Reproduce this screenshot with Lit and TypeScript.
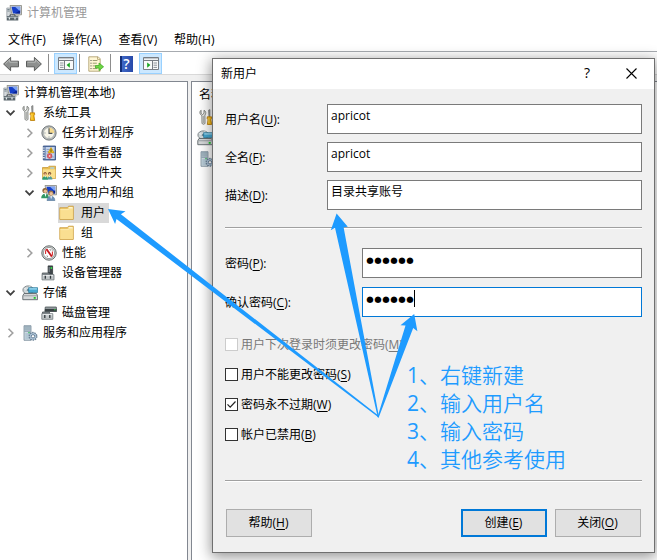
import { LitElement, html, svg, css, nothing } from "lit";
import { customElement } from "lit/decorators.js";
import { classMap } from "lit/directives/class-map.js";

const monitor = svg`
  <path d="M4 .5h11.5v9.3H6z" fill="#d8d9d6" stroke="#85877f" stroke-width=".8"/>
  <path d="M5.5 1.8h8.6v6.7H7z" fill="#1740c8"/>
  <path d="M9 1.8h5.1v4.6z" fill="#7fa5f4"/>
  <path d="M9 8.5l5.1-3.2v3.2z" fill="#0b2391"/>`;
const computer = svg`${monitor}
  <path d="M.8 3h3.5v8.5H.8z" fill="#d5dadd" stroke="#8b9499" stroke-width=".7"/>
  <path d="M1.4 4.5h2.2M1.4 6h2.2" stroke="#5d6e78" stroke-width=".8"/>
  <path d="M9 10h4l1 1.500H8z" fill="#b4b5b0"/>
  <path d="M.7 11.2h11.6v4.3H.7z" fill="#59646b"/>
  <path d="M4 11V9.9h5V11" fill="none" stroke="#40494f"/>
  <path d="M1.2 12h10.6v1H1.2z" fill="#9da8ad"/>
  <path d="M3.4 12.4v2M9 12.4v2" stroke="#e7ecee" stroke-width="1.3"/>`;
const gear = svg`
  <circle cx="11" cy="11.3" r="3.7" fill="#b7cde0" stroke="#6c8296" stroke-width="1.5" stroke-dasharray="1.5 .8"/>
  <circle cx="11" cy="11.3" r="1.7" fill="#fff" stroke="#59748d" stroke-width=".9"/>`;

const icons: Record<string, unknown> = {
  computer,
  tools: svg`
    <path d="M2.1 1.2v3l1.3 1.4 1.6-1.3v-3C7 2 7.3 4.6 5.9 6.1L6 14.2c-.2 1.4-2.8 1.4-3 0L2.9 6.6C.5 5.5.3 2.3 2.1 1.2z" fill="#e6e7e4" stroke="#777a77" stroke-width=".9"/>
    <path d="M4.5 7v7" stroke="#a8aaa7" stroke-width=".9"/>
    <path d="M9.5 1.2l1.5-.7v7H9.9z" fill="#999c9a" stroke="#757775" stroke-width=".6"/>
    <path d="M8.3 7.8h4.2l.1 2-.7.9.8 4.8H8.4l.6-4.8-.8-1z" fill="#f3b610" stroke="#b97a05" stroke-width=".8"/>
    <path d="M9.9 8.5v6" stroke="#ffe06a" stroke-width=".9"/>`,
  clock: svg`
    <circle cx="8" cy="8" r="7.1" fill="#c0c3c3" stroke="#6e7476"/>
    <circle cx="8" cy="8" r="5.5" fill="#f7f5e9" stroke="#90979b" stroke-width=".6"/>
    <path d="M8 8V2.6A5.4 5.4 0 0 1 13.4 8z" fill="#f5da90"/>
    <path d="M8 3.2V8.4h3.4" fill="none" stroke="#4b5154" stroke-width="1.1"/>
    <path d="M3.6 8h.8M8 12.4v-.8" stroke="#5d6b78"/>`,
  events: svg`
    <path d="M2.3 1h12.2v14H2.3z" fill="#5d79a9" stroke="#304d80" stroke-width=".8"/>
    <path d="M4.6 2h9v12h-9z" fill="#c3d2ea"/>
    <path d="M5.5 4.5h3M5.5 6.7h2M5.500 8.9h1M11 12h2" stroke="#7b90b7" stroke-width=".7"/>
    <path d="M1 3h2.7M1 5.4h2.7M1 7.8h2.7M1 10.2h2.7M1 12.6h2.7" stroke="#e6e9ed" stroke-width="1.1"/>
    <path d="M10 2.6l3 5.1H7.100z" fill="#ffd41c" stroke="#c18b00" stroke-width=".7"/>
    <path d="M10 4.3v2.6" stroke="#37300a" stroke-width=".9"/>
    <circle cx="8.6" cy="11" r="2.4" fill="#e0525a" stroke="#b8303a" stroke-width=".5"/>
    <path d="M7.7 10.100l1.800 1.800m0-1.800l-1.800 1.800" stroke="#fff" stroke-width=".8"/>`,
  shared: svg`
    <path d="M1.500 2.500h5.500l1-1.300h6.5v12.300h-13z" fill="#e9bd50" stroke="#c0902c" stroke-width=".7"/>
    <path d="M9.2 2.300h4v1.400h-4z" fill="#a5d4ed"/>
    <path d="M1.800 4.300h12.500v9H1.800z" fill="#fadf8c"/>
    <circle cx="4.100" cy="8.6" r="1.600" fill="#8a542d"/><circle cx="4.2" cy="9.2" r="1" fill="#efbc92"/>
    <path d="M1.200 14.800q.1-3.400 3-3.600 2.600.2 2.800 3.600z" fill="#2f9b70"/>
    <circle cx="8.6" cy="8.600" r="1.600" fill="#714728"/><circle cx="8.6" cy="9.2" r="1" fill="#efbc92"/>
    <path d="M6.400 14.400q.3-3.100 2.300-3.200 2.500.2 2.700 3.200z" fill="#4f9b9a"/>
    <path d="M3.6 11l.6 1.700.7-1.700M8 11l.6 1.500.6-1.500" fill="#fff"/>`,
  users: svg`${monitor}
    <circle cx="4" cy="5.5" r="2.6" fill="#876137"/><circle cx="4.4" cy="6.2" r="1.7" fill="#ebbc91"/>
    <path d="M.2 13.2Q.4 8.9 4.3 8.8q3.5.2 3.5 4.4z" fill="#329765"/>
    <path d="M3.6 8.9l.8 3 1-3z" fill="#fff"/>
    <circle cx="9.9" cy="8.1" r="2.6" fill="#9d7648"/><circle cx="10.2" cy="8.7" r="1.7" fill="#ebc29b"/>
    <path d="M6 15.7q.3-4.4 4-4.5 3.7.2 3.9 4.5z" fill="#6c92bb" stroke="#53708d" stroke-width=".5"/>
    <path d="M9.3 11.3l.8 3 1-3z" fill="#fff"/>`,
  folder: svg`
    <path d="M.8 2.700h7.400L9.600 1.200h4.700v13.200H.8z" fill="#efc969" stroke="#c99b3b" stroke-width=".8"/>
    <path d="M10 2h3.700v1.200h-4.700z" fill="#fff5ce"/>
    <path d="M1.2 4.200h7.700l1.200-1h3.800V14H1.200z" fill="#fadf91"/>
    <path d="M1.3 4.600H9l1.200-1h3.600" fill="none" stroke="#fff3c8" stroke-width=".6"/>`,
  perf: svg`
    <circle cx="8" cy="8" r="7.2" fill="#d1d4d3" stroke="#676d6d"/>
    <circle cx="8" cy="8" r="5.600" fill="#fff" stroke="#858b8b" stroke-width=".8"/>
    <path d="M4.600 9V6q.2-1.800 1.700-1.800M11.400 6.500v3q-.1 1.800-1.500 2.200" fill="none" stroke="#d53131" stroke-width="1.100"/>
    <path d="M5.600 4.300l5 6.900" stroke="#c71920" stroke-width="1.900"/>
    <path d="M8.800 4l1 1.700M10.800 4.500l.7 1M6.600 12l-.6-1.500" fill="none" stroke="#555" stroke-width=".7"/>`,
  device: svg`
    <path d="M7.1.9h4.5v8.5H7.1z" fill="#40484c" stroke="#252c2f" stroke-width=".7"/>
    <path d="M8.2 2v5" stroke="#a1abb0" stroke-width=".7"/>
    <path d="M9.6 2h1.5v2H9.6z" fill="#35d849"/>
    <path d="M1.3 10V8h7v2" fill="#858d91" stroke="#4c5356" stroke-width=".8"/>
    <path d="M1 9.6h12v5.3H1z" fill="#c1c6c8" stroke="#727a7e" stroke-width=".8"/>
    <path d="M2 10.6h10" stroke="#eef0f1"/>
    <path d="M4.3 10.7v3M9.5 10.7v3" stroke="#30383c" stroke-width="1.3"/>`,
  storage: svg`
    <ellipse cx="6.2" cy="5" rx="5.3" ry="4.1" fill="#cfd6d8" stroke="#788184" stroke-width=".9"/>
    <path d="M2.4 3.7l3.8 1.1L8 1.2" fill="none" stroke="#f4f7f8"/>
    <ellipse cx="6" cy="5" rx="1.4" ry="1.1" fill="#6a8490"/>
    <path d="M6.6 2.7h9v4.8h-9z" fill="#46a8d2" stroke="#257597" stroke-width=".7"/>
    <path d="M7.3 3.3h7.6v1.2H7.3z" fill="#a8def3"/>
    <path d="M2 8.5h12.5l1.1 2.2v4H.8v-4z" fill="#d5d8d9" stroke="#60686b" stroke-width=".9"/>
    <path d="M1.2 10.4h14v.8h-14z" fill="#8b9396"/>
    <path d="M11.7 12h2v1.8h-2z" fill="#1cc92b"/>`,
  disk: svg`
    <path d="M4.3 2h11l.4 4.5H3.8z" fill="#929a9d" stroke="#4c5558" stroke-width=".8"/>
    <path d="M4 4h11.5v2.5H4z" fill="#394144"/><path d="M13.2 4.8h1.4" stroke="#35dc45" stroke-width="1.1"/>
    <path d="M1.5 9V7h7v2" fill="#858d91" stroke="#4c5356" stroke-width=".8"/>
    <path d="M.8 8.7h11v5.6H.8z" fill="#c1c6c8" stroke="#727a7e" stroke-width=".8"/>
    <path d="M1.7 9.7h9.5" stroke="#eef0f1"/>
    <path d="M3.8 10v3M8.8 10v3" stroke="#30383c" stroke-width="1.3"/>`,
  services: svg`
    <path d="M2 .7h7v14.6H2z" fill="#cedae2" stroke="#778b99" stroke-width=".8"/>
    <path d="M2.5 2h6M2.5 4h6M2.5 6.1h6" stroke="#5e7b8e" stroke-width=".8"/>
    <path d="M3.3 8h4.5v6.4H3.3z" fill="#b3c7d4"/>
    <path d="M6.3 7h1.4v1.2H6.3z" fill="#35bb5b"/>${gear}`,
  back: svg`<path d="M.6 8L7.600 1.400v3.800h7.900v5.600H7.600v3.900z" fill="#8e908f" stroke="#5a5c5b"/>
    <path d="M2.4 7.700l4.300-4v2.500h7.800" fill="none" stroke="#bcbebd" stroke-width=".9"/>`,
  forward: svg`<path d="M15.4 8l-7-6.600v3.800H.5v5.600h7.900v3.900z" fill="#8e908f" stroke="#5a5c5b"/>
    <path d="M1.500 6.200h7.800V3.700l4.300 4" fill="none" stroke="#bcbebd" stroke-width=".9"/>`,
  tree: svg`<path d="M.5 2.5h15v12H.5z" fill="#f9fafa" stroke="#777d84"/>
    <path d="M1 3h14v1.2H1z" fill="#c3c8cd"/><path d="M1 5.500h14" stroke="#777d84"/>
    <path d="M6.500 6v8.5" stroke="#777d84"/><path d="M2 8h3.500M2 10.2h3.500M2 12.4h3.500" stroke="#8a9299"/>
    <path d="M11.800 7.400v5.400L8.600 10.100z" fill="#16a51e"/>`,
  panel: svg`<path d="M.5 2.5h15v12H.5z" fill="#f9fafa" stroke="#777d84"/>
    <path d="M1 3h14v1.2H1z" fill="#c3c8cd"/><path d="M1 5.500h14" stroke="#777d84"/>
    <path d="M9.500 6v8.5" stroke="#777d84"/><path d="M10.500 8H14M10.500 10.2H14M10.500 12.4H14" stroke="#8a9299"/>
    <path d="M4.200 7.400v5.400l3.200-2.700z" fill="#16a51e"/>`,
  exporting: svg`<path d="M.8.8h9.400l2 2v12.400H.8z" fill="#fff7d5" stroke="#a79562" stroke-width=".8"/>
    <path d="M9.5 1v2.400H12" fill="none" stroke="#a79562" stroke-width=".7"/>
    <path d="M2.500 4.500h1M2.500 7.200h1M2.500 9.900h1M2.500 12.600h1" stroke="#484848"/>
    <path d="M4.700 4.500h4.700M4.700 7.200h4.100M4.700 9.900h3M4.700 12.600h4.500" stroke="#81865a" stroke-width=".8"/>
    <path d="M7.500 9.500h3.500V7l4.600 3.800-4.600 3.800v-2.500H7.500z" fill="#6ed544" stroke="#35a51b" stroke-width=".7"/>`,
};

const icon = (name: string) => svg`<svg width="16" height="16" viewBox="0 0 16 16">${icons[name]}</svg>`;

interface TreeNode { text: string; icon: string; level: number; open?: boolean; selected?: boolean }

const nodes: TreeNode[] = [
  { text: "计算机管理(本地)", icon: "computer", level: 0 },
  { text: "系统工具", icon: "tools", level: 1, open: true },
  { text: "任务计划程序", icon: "clock", level: 2, open: false },
  { text: "事件查看器", icon: "events", level: 2, open: false },
  { text: "共享文件夹", icon: "shared", level: 2, open: false },
  { text: "本地用户和组", icon: "users", level: 2, open: true },
  { text: "用户", icon: "folder", level: 3, selected: true },
  { text: "组", icon: "folder", level: 3 },
  { text: "性能", icon: "perf", level: 2, open: false },
  { text: "设备管理器", icon: "device", level: 2 },
  { text: "存储", icon: "storage", level: 1, open: true },
  { text: "磁盘管理", icon: "disk", level: 2 },
  { text: "服务和应用程序", icon: "services", level: 1, open: false },
];

const base = css`
  * { box-sizing: border-box; }
  svg { display: block; flex: none; }
`;

@customElement("console-tree")
class ConsoleTree extends LitElement {
  static styles = [base, css`
    :host { display: block; padding-top: 1px; }
    .row { display: flex; align-items: center; height: 20px; }
    .level0 { padding-left: 3px; }
    .level1 { padding-left: 3px; }
    .level2 { padding-left: 22px; }
    .level3 { padding-left: 58px; }
    .chevron { width: 16px; height: 16px; margin-right: 3px; flex: none; }
    .item { display: flex; align-items: center; height: 20px; gap: 5px; }
    .level3 .item { padding: 0 4px 0 1px; gap: 6px; }
    .selected .item { background: #d9d9d9; }
  `];
  render() {
    return nodes.map((n) => html`
      <div class=${classMap({ row: true, ["level" + n.level]: true, selected: !!n.selected })}>
        ${n.level === 1 || n.level === 2 ? html`<div class="chevron">${n.open === undefined ? nothing : n.open
          ? svg`<svg width="16" height="16"><path d="M3.500 5.700l4 4 4-4" fill="none" stroke="#404040" stroke-width="1.700"/></svg>`
          : svg`<svg width="16" height="16"><path d="M5.500 3.700l4.300 4.300-4.300 4.300" fill="none" stroke="#a0a0a0" stroke-width="1.600"/></svg>`}</div>` : nothing}
        <div class="item">${icon(n.icon)}<span>${n.text}</span></div>
      </div>`);
  }
}

@customElement("new-user-dialog")
class NewUserDialog extends LitElement {
  static styles = [base, css`
    :host { display: flex; flex-direction: column; border: 1px solid #6f6f6f; background: #f0f0f0;
      box-shadow: 0 3px 13px 1px rgba(0, 0, 0, .42); }
    .title { display: flex; align-items: center; height: 30px; background: #fff; padding-left: 8px; flex: none; }
    .title .name { flex: 1; }
    .title .help { width: 14px; text-align: center; margin-right: 32px; font-size: 14px; font-weight: 500; line-height: 26px; padding-bottom: 2px; }
    .title svg { margin: 0 17px 2px 0; }
    .body { display: flex; flex-direction: column; padding: 15px 12px 0 12px; }
    .field { display: flex; align-items: center; height: 30px; margin-bottom: 8px; }
    .field label { flex: none; width: 102px; padding-top: 2px; }
    .field.secret label { width: 137px; }
    .box { flex: 1; height: 30px; border: 1px solid #7a7a7a; background: #fff; padding: 0 3px; display: flex; line-height: 21px; }
    .box.focus { border-color: #0078d7; }
    .dots { display: flex; font-family: "DejaVu Sans", sans-serif; font-size: 8.5px; line-height: 22px; }
    .dots span { width: 8px; display: flex; justify-content: center; }
    .caret { width: 1px; height: 17px; background: #000; margin-top: 2px; }
    .rule { height: 2px; border-top: 1px solid #a0a0a0; background: #fff; }
    .first { margin: 9px 0 19px; }
    .second { margin: 39px 0 27px; }
    .secret { margin-bottom: 9px; }
    .checks { display: flex; flex-direction: column; gap: 17px; margin-top: 12px; }
    .check { display: flex; align-items: center; height: 13px; gap: 3px; }
    .mark { width: 13px; height: 13px; border: 1px solid #333; background: #fff; }
    .off { color: #787878; }
    .off .mark { border-color: #ccc; }
    .buttons { display: flex; gap: 8px; padding: 0 1px; }
    .button { width: 86px; height: 28px; border: 1px solid #adadad; background: #e1e1e1; display: flex; align-items: center;
      justify-content: center; padding-right: 1px; }
    .help-button { margin-right: auto; }
    .default { border: 2px solid #0078d7; }
    u { text-underline-offset: 1.5px; text-decoration-thickness: 1px; }
  `];
  private key(k: string) { return html`(<u>${k}</u>)`; }
  private field(label: string, k: string, value: string) {
    return html`<div class="field"><label>${label}${this.key(k)}:</label><div class="box">${value}</div></div>`;
  }
  private secret(label: string, k: string, focus: boolean) {
    return html`<div class="field secret"><label>${label}${this.key(k)}:</label>
      <div class=${classMap({ box: true, focus })}><div class="dots">${Array.from({ length: 6 }, () => html`<span>●</span>`)}</div>
      ${focus ? html`<i class="caret"></i>` : nothing}</div></div>`;
  }
  private check(label: string, k: string, checked = false, off = false) {
    return html`<div class=${classMap({ check: true, off })}><div class="mark">${checked
      ? svg`<svg width="11" height="11"><path d="M1.500 5.300l2.700 2.800 5.300-5.600" fill="none" stroke="#222" stroke-width="1.200"/></svg>` : nothing}</div>
      <span>${label}${this.key(k)}</span></div>`;
  }
  render() {
    return html`
      <div class="title"><span class="name">新用户</span><span class="help">?</span>
        <svg width="11" height="11"><path d="M.5.5l10 10m0-10l-10 10" stroke="#000" stroke-width="1.100"/></svg></div>
      <div class="body">
        ${this.field("用户名", "U", "apricot")}
        ${this.field("全名", "F", "apricot")}
        ${this.field("描述", "D", "目录共享账号")}
        <div class="rule first"></div>
        ${this.secret("密码", "P", false)}
        ${this.secret("确认密码", "C", true)}
        <div class="checks">
          ${this.check("用户下次登录时须更改密码", "M", false, true)}
          ${this.check("用户不能更改密码", "S")}
          ${this.check("密码永不过期", "W", true)}
          ${this.check("帐户已禁用", "B")}
        </div>
        <div class="rule second"></div>
        <div class="buttons">
          <div class="button help-button"><span>帮助${this.key("H")}</span></div>
          <div class="button default"><span>创建${this.key("E")}</span></div>
          <div class="button"><span>关闭${this.key("O")}</span></div>
        </div>
      </div>`;
  }
}

@customElement("app-root")
class AppRoot extends LitElement {
  static styles = [base, css`
    :host { display: flex; flex-direction: column; position: relative; width: 657px; height: 560px; overflow: hidden;
      background: #f0f0f0; color: #000; font: 12px/16px "Open Sans", "Noto Sans CJK SC", sans-serif; white-space: nowrap; }
    .caption { display: flex; align-items: center; gap: 5px; height: 25px; padding-left: 6px; background: #fff; color: #999; flex: none; }
    .menu { display: flex; align-items: center; height: 26px; padding: 3px 0 0 8px; gap: 16.500px; background: #fff; flex: none; letter-spacing: .15px; }
    .tools { display: flex; align-items: center; height: 24px; border-top: 1px solid #a7abb0; border-bottom: 1px solid #d9d9d9;
      background: #fff; padding-left: 3px; flex: none; }
    .tools .forward { margin-left: 7px; }
    .tools > svg, .tools .forward { margin-top: 2px; }
    .sep { width: 1px; height: 18px; background: #8d8d8d; margin: 0 5px 0 6px; }
    .sep.tight { margin: 0 8px 0 2px; }
    .sep.wide { margin: 0 9px 0 6px; }
    .toggle { width: 23px; height: 21px; background: #cce8ff; border: 1px solid #99d1ff; display: flex; align-items: center; justify-content: center; }
    .book { width: 13px; height: 16px; background: linear-gradient(90deg, #142f78 2px, #3f68c7 2px, #2749a9); color: #fff;
      font-size: 14px; font-weight: 600; line-height: 16px; text-align: center; margin: 1px 6px 0 0; }
    .panes { display: flex; flex: 1; gap: 3px; margin-top: 6px; }
    console-tree { width: 188px; background: #fff; border: solid #828790; border-width: 1px 1px 0 0; flex: none; }
    .list { flex: 1; background: #fff; border: solid #828790; border-width: 1px 0 0 1px; padding: 5px 0 0 7px; }
    .list .head { height: 17px; }
    .list .entry { height: 21px; display: flex; align-items: center; padding-top: 4px; }
    .list .entry.out { margin-left: -2px; }
    new-user-dialog { position: absolute; left: 212px; top: 58px; width: 443px; height: 495px; }
    .arrows { position: absolute; left: 0; top: 0; }
    .steps { position: absolute; left: 407px; top: 361px; color: #1e9bff; font-size: 21px; line-height: 28px; font-weight: 350; }
    .steps .num { display: inline-block; width: 12px; font-weight: 400; }
  `];
  render() {
    return html`
      <div class="caption">${icon("computer")}<span>计算机管理</span></div>
      <div class="menu"><span>文件(F)</span><span>操作(A)</span><span>查看(V)</span><span>帮助(H)</span></div>
      <div class="tools">
        ${icon("back")}<div class="forward">${icon("forward")}</div><i class="sep"></i>
        <div class="toggle">${icon("tree")}</div><i class="sep tight"></i>
        ${icon("exporting")}<i class="sep wide"></i>
        <div class="book">?</div><div class="toggle">${icon("panel")}</div>
      </div>
      <div class="panes">
        <console-tree></console-tree>
        <div class="list"><div class="head">名称</div>
          <div class="entry">${icon("tools")}</div>
          <div class="entry out">${icon("storage")}</div>
          <div class="entry">${icon("services")}</div>
        </div>
      </div>
      <new-user-dialog></new-user-dialog>
      <svg class="arrows" width="657" height="560" fill="#1e9bff">
        <path d="M108 209l17.500 2.200-4.600 3.100L379 416l-1 1L116.500 219l-1.400 5z"/>
        <path d="M336.600 213.500l11.200 13.200-4.200.6L379 417h-1.300L335 227.800l-4.200 2.500z"/>
        <path d="M414.200 314l3.200 17.200-4.200-3.200L378.500 418l-1-1L405.500 325.500l-5-.2z"/>
      </svg>
      <div class="steps">
        ${["右键新建", "输入用户名", "输入密码", "其他参考使用"].map((t, i) => html`<div><span class="num">${i + 1}</span>、${t}</div>`)}
      </div>`;
  }
}
